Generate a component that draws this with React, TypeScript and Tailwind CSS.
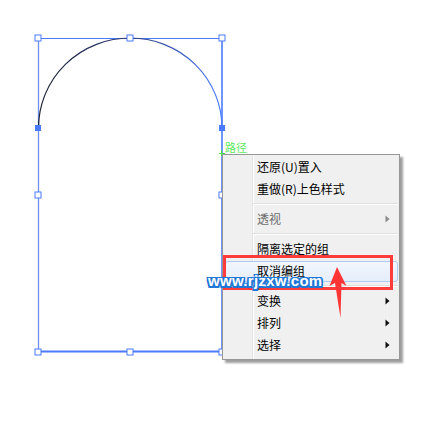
import React from "react";

type Item =
  | { kind: "item"; label: string; disabled?: boolean; sub?: boolean; hover?: boolean }
  | { kind: "sep" };

const items: Item[] = [
  { kind: "item", label: "还原(U)置入" },
  { kind: "item", label: "重做(R)上色样式" },
  { kind: "sep" },
  { kind: "item", label: "透视", disabled: true, sub: true },
  { kind: "sep" },
  { kind: "item", label: "隔离选定的组" },
  { kind: "item", label: "取消编组", hover: true },
  { kind: "sep" },
  { kind: "item", label: "变换", sub: true },
  { kind: "item", label: "排列", sub: true },
  { kind: "item", label: "选择", sub: true },
];

function Handle({ x, y, filled }: { x: number; y: number; filled?: boolean }) {
  return filled ? (
    <rect x={x - 3} y={y - 3} width={6} height={6} fill="#4a7bff" />
  ) : (
    <rect x={x - 3} y={y - 3} width={6} height={6} fill="#fff" stroke="#4a7bff" strokeWidth={1} />
  );
}

export default function App() {
  return (
    <div className="relative w-[441px] h-[422px] bg-white overflow-hidden" style={{ fontFamily: '"Noto Sans CJK SC", "Noto Sans", sans-serif' }}>
      <svg className="absolute left-0 top-0" width={441} height={422} viewBox="0 0 441 422">
        <defs>
          <linearGradient id="arch" x1="38" y1="0" x2="222" y2="0" gradientUnits="userSpaceOnUse">
            <stop offset="0" stopColor="#1a1f33" />
            <stop offset="0.5" stopColor="#2d3d78" />
            <stop offset="1" stopColor="#4a7bff" />
          </linearGradient>
        </defs>
        {/* bounding box */}
        <line x1={38} y1={38.5} x2={222} y2={38.5} stroke="#4a7bff" strokeWidth={1} />
        <line x1={38.5} y1={38} x2={38.5} y2={352} stroke="#6f8fe8" strokeWidth={1.3} />
        <line x1={222} y1={38} x2={222} y2={352} stroke="#4a7bff" strokeWidth={1.6} />
        <line x1={38} y1={351.5} x2={222} y2={351.5} stroke="#4a7bff" strokeWidth={2} />
        {/* arch */}
        <path d="M38.5 128 A91.75 90 0 0 1 222 128" fill="none" stroke="url(#arch)" strokeWidth={1.2} />
        <Handle x={38} y={38} />
        <Handle x={130} y={38} />
        <Handle x={222} y={38} />
        <Handle x={38} y={195} />
        <Handle x={222} y={195} />
        <Handle x={38} y={352} />
        <Handle x={130} y={352} />
        <Handle x={222} y={352} />
        <Handle x={38} y={128} filled />
        <Handle x={222} y={128} filled />
        {/* green cursor */}
        <line x1={219} y1={153.5} x2={225} y2={153.5} stroke="#4fe04f" strokeWidth={1} />
        <line x1={221.5} y1={150} x2={221.5} y2={156} stroke="#4fe04f" strokeWidth={1} />
      </svg>

      <div className="absolute left-[225px] top-[140px] text-[11px] leading-[14px] text-[#5be85b]">路径</div>

      {/* context menu */}
      <div className="absolute left-[222px] top-[154px] w-[178px] border border-[#979797] bg-[#f0f0f0] pt-[1px] pb-[3px] shadow-[3px_3px_2px_rgba(0,0,0,0.38)]">
        <div className="absolute left-[29px] top-0 bottom-0 w-[2px] border-l border-[#e2e3e3] border-r border-r-white" />
        {items.map((it, i) =>
          it.kind === "sep" ? (
            <div key={i} className="relative h-[8px] flex items-center pl-[30px] pr-[1px]">
              <div className="w-full h-[2px] border-t border-[#e0e0e0] border-b border-b-white" />
            </div>
          ) : (
            <div key={i} className="relative h-[22px] flex items-center">
              {it.hover && (
                <div className="absolute left-[2px] right-[1px] top-[1px] bottom-0 rounded-[3px] border border-[#aeccf1] bg-gradient-to-b from-[#f2f6fc] to-[#e5eefb]" />
              )}
              <span
                className={
                  "relative pl-[34px] text-[12px] leading-[16px] " +
                  (it.disabled ? "text-[#6d6d6d]" : "text-black")
                }
              >
                {it.label}
              </span>
              {it.sub && (
                <svg className="absolute right-[9px] top-[7px]" width={5} height={8} viewBox="0 0 5 8">
                  <path d="M0.5 0.5 L4.5 4 L0.5 7.5 Z" fill={it.disabled ? "#8a8a8a" : "#111"} />
                </svg>
              )}
            </div>
          )
        )}
      </div>

      {/* red highlight frame */}
      <div className="absolute left-[223px] top-[255px] w-[170px] h-[35px] border-[3px] border-[#ff3b3b]" />

      {/* watermark */}
      <div
        className="absolute left-[208px] top-[272px] text-[15px] leading-[18px] font-bold text-white tracking-[0.3px] [text-shadow:1.5px_0_0_#1f78d6,-1.5px_0_0_#1f78d6,0_1.5px_0_#1f78d6,0_-1.5px_0_#1f78d6,1.5px_1.5px_0_#1f78d6,-1.5px_-1.5px_0_#1f78d6,1.5px_-1.5px_0_#1f78d6,-1.5px_1.5px_0_#1f78d6]"
        style={{ fontFamily: '"Liberation Sans", Arial, sans-serif' }}
      >
        www.rjzxw.com
      </div>

      {/* red arrow */}
      <svg className="absolute left-0 top-0 pointer-events-none" width={441} height={422} viewBox="0 0 441 422">
        <path d="M337 267 L346.5 286 L341.5 283 L340.5 318 L335 283 L329.5 286 Z" fill="#ff3535" />
      </svg>
    </div>
  );
}
